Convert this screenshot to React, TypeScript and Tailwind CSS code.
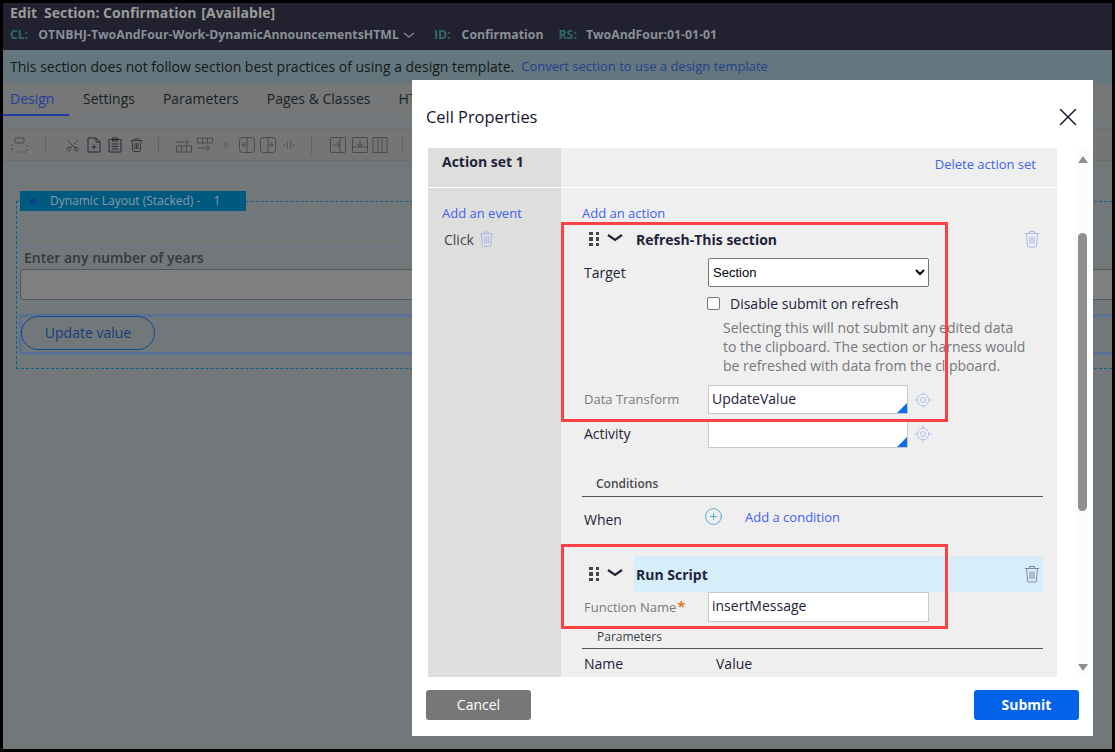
import { CirclePlus, LocateFixed, Scissors, X } from "lucide-react";

function TrashIcon({ className }: { className: string }) {
  return (
    <svg viewBox="0 0 16 18" fill="none" stroke="currentColor" strokeWidth="1" className={className}>
      <path d="M1 3.5h14M5.500 3.500V1.500h5v2M2.500 3.500l1 12.500q.1 1 1 1h7q.9 0 1-1l1-12.500" />
      <path d="M6 6.500v7.500M8 6.500v7.500M10 6.500v7.500" />
    </svg>
  );
}

function DragDots() {
  return (
    <div className="grid grid-cols-2 gap-x-[3px] gap-y-[2px] w-[10px]">
      {[0, 1, 2, 3, 4, 5].map((i) => (
        <span key={i} className="w-[3.5px] h-[3.5px] bg-[#45454f]" />
      ))}
    </div>
  );
}

function Chevron() {
  return (
    <svg viewBox="0 0 16 8" fill="none" stroke="currentColor" strokeWidth="2.2" className="w-[16px] h-[8px] ml-[8px] -mt-[2px] text-[#23233a] shrink-0">
      <path d="M1 1l7 5 7-5" />
    </svg>
  );
}

// pega style autocomplete field with the little blue corner
function PromptInput({ value }: { value: string }) {
  return (
    <div className="relative w-[200px] h-[29px] bg-white border border-[#c8c8c8] pl-[3px] text-[14px] leading-[25px] text-[#23233a]">
      {value}
      <span className="absolute right-0 bottom-0 w-0 h-0 border-l-[10px] border-l-transparent border-b-[10px] border-b-[#0a6cf0]" />
    </div>
  );
}

function ToolIcon({ children, w = "w-[16px]" }: { children: React.ReactNode; w?: string }) {
  return (
    <svg viewBox="0 0 16 16" fill="none" stroke="currentColor" strokeWidth="1" className={`${w} h-[16px] shrink-0`}>
      {children}
    </svg>
  );
}

function Toolbar() {
  return (
    <div className="h-[32px] mt-[13px] bg-[#737577] border-y border-[#6b6d6f] flex items-center pl-[7px] text-[#4a4c4f]">
      <ToolIcon w="w-[18px]">
        <path d="M4 1h9v5H4z" />
        <path d="M1 7v8h15V7" strokeDasharray="2 2" />
      </ToolIcon>
      <span className="w-px h-[17px] bg-[#606264] ml-[17px] mr-[19px]" />
      <Scissors size={15} strokeWidth={1} className="-rotate-90 text-[#25272a]" />
      <svg viewBox="0 0 14 16" fill="none" stroke="currentColor" strokeWidth="1" className="w-[14px] h-[16px] ml-[7px] text-[#2b2b2e]">
        <path d="M1 1h8l4 4v10H1zM9 1v4h4M7 7.500v5M4.500 10h5" />
      </svg>
      <svg viewBox="0 0 14 16" fill="none" stroke="currentColor" strokeWidth="1" className="w-[14px] h-[16px] ml-[7px] text-[#2b2b2e]">
        <path d="M1 2.500h12V15H1zM4.500 1h5v3h-5zM3.500 7h7M3.500 9.500h7M3.500 12h7" />
      </svg>
      <TrashIcon className="w-[13px] h-[16px] ml-[8px] text-[#2b2b2e]" />
      <span className="w-px h-[17px] bg-[#606264] ml-[15px] mr-[16px]" />
      <ToolIcon w="w-[17px]">
        <path d="M1 9h15v6H1zM6 9v6M11 9v6M1 5h12M10 2l3 3-3 3" />
      </ToolIcon>
      <ToolIcon w="w-[17px] ml-[4px]">
        <path d="M1 1h15v5H1zM6 1v5M11 1v5M1 11h12M10 8l3 3-3 3" />
      </ToolIcon>
      <ToolIcon w="w-[8px] ml-[9px]">
        <path d="M8 1v4M5 3l3 3 3-3M1 8h14M8 15v-4M5 13l3-3 3 3" />
      </ToolIcon>
      <ToolIcon w="w-[16px] ml-[9px]">
        <rect x="0.5" y="0.5" width="15" height="15" rx="3" />
        <path d="M8 1v14M8 8H3M5.500 5.500 3 8l2.500 2.500" />
      </ToolIcon>
      <ToolIcon w="w-[16px] ml-[5px]">
        <rect x="0.5" y="0.5" width="15" height="15" rx="3" />
        <path d="M8 1v14M8 8h5M10.500 5.500 13 8l-2.500 2.500" />
      </ToolIcon>
      <ToolIcon w="w-[14px] ml-[6px]">
        <path d="M6 4v8M10 4v8M1 8h3M12 8h3" />
      </ToolIcon>
      <span className="w-px h-[17px] bg-[#606264] ml-[15px] mr-[18px]" />
      <ToolIcon w="w-[16px]">
        <rect x="0.5" y="0.5" width="15" height="15" rx="1" />
        <path d="M10 1v14M3 8h7M7 5l3 3-3 3" />
      </ToolIcon>
      <ToolIcon w="w-[16px] ml-[6px]">
        <rect x="0.5" y="0.5" width="15" height="15" rx="1" />
        <path d="M1 10h14M8 3v7M5 7l3 3 3-3" />
      </ToolIcon>
      <ToolIcon w="w-[16px] ml-[4px]">
        <path d="M1 .5h14M1 15.500h14M1 .5v15M6 .5v15M10 .5v15M15 .5v15" />
      </ToolIcon>
      <span className="w-px h-[17px] bg-[#606264] ml-[14px]" />
    </div>
  );
}

function Background() {
  return (
    <div className="flex flex-col h-full bg-[#72777a] overflow-hidden">
      <div className="h-[48px] bg-[#21212f] pl-[7px] -mt-[2px] pt-[1px] box-content shrink-0">
        <div className="flex items-baseline h-[22px] font-bold text-[14px] text-[#9b9b9b] leading-[22px]">
          <span className="mr-[7px]">Edit</span>
          <span>Section: Confirmation</span>
          <span className="ml-[5px]">[Available]</span>
        </div>
        <div className="flex items-center h-[22px] font-bold text-[12.300px] text-[#8b8f98]">
          <span className="text-[#2f6b66] mr-[10px]">CL:</span>
          <span>OTNBHJ-TwoAndFour-Work-DynamicAnnouncementsHTML</span>
          <svg viewBox="0 0 12 7" fill="none" stroke="currentColor" strokeWidth="1.2" className="w-[12px] h-[7px] ml-[4px]">
            <path d="M1 1l5 4 5-4" />
          </svg>
          <span className="text-[#2f6b66] ml-[19px] mr-[11px]">ID:</span>
          <span>Confirmation</span>
          <span className="text-[#2f6b66] ml-[15px] mr-[9px]">RS:</span>
          <span>TwoAndFour:01-01-01</span>
        </div>
      </div>
      <div className="h-[33px] bg-[#65777e] pl-[7px] flex items-center text-[14px] text-[#14181b] shrink-0">
        This section does not follow section best practices of using a design template.
        <span className="ml-[7px] text-[13px] text-[#20428f]">Convert section to use a design template</span>
      </div>
      <div className="h-[33px] bg-[#757779] pl-[7px] flex text-[14px] text-[#1c1f24] shrink-0">
        <div className="w-[66px] -ml-[7px] pl-[7px] border-b-2 border-[#1f3d9c] text-[#26409a] leading-[31px]">Design</div>
        <span className="ml-[14px] leading-[31px]">Settings</span>
        <span className="ml-[28px] leading-[31px]">Parameters</span>
        <span className="ml-[28px] leading-[31px]">Pages &amp; Classes</span>
        <span className="ml-[28px] leading-[31px]">HTML</span>
      </div>
      <Toolbar />
      <div className="relative ml-[13px] -mr-[20px] mt-[40px] h-[168px] border border-dashed border-[#12607f]">
        <div className="absolute -top-[11px] left-[3px] w-[226px] h-[20px] bg-[#005a80] flex items-center text-[12px] text-[#8a9aa6]">
          <span className="w-[5px] h-[5px] ml-[11px] mr-[14px] rounded-full border border-[#1a1a9c]" />
          Dynamic Layout (Stacked) -<span className="ml-[13px]">1</span>
        </div>
        <div className="mt-[11px] mx-[2px] h-[22px] border border-dashed border-[#687a96]" />
        <div className="mt-[12px] mx-[2px] h-[54px] border border-dashed border-[#687a96] flex flex-col">
          <div className="pl-[4px] h-[21px] text-[14px] font-semibold text-[#38383c] leading-[19px]">Enter any number of years</div>
          <div className="h-[32px] bg-[#7f7f7f] border border-[#555658] rounded-[4px]" />
        </div>
        <div className="mt-[13px] mx-[2px] h-[41px] border-[3px] border-[#5a7195] flex items-start">
          <div className="w-[134px] h-[34px] -ml-[1px] -mt-[1px] rounded-full border border-[#0f4c8c] text-center text-[14px] leading-[32px] text-[#153e78]">Update value</div>
        </div>
      </div>
    </div>
  );
}

function Dialog() {
  return (
    <div className="absolute left-[412px] top-[80px] w-[681px] h-[656px] bg-white flex flex-col">
      <div className="h-[68px] shrink-0 flex items-center justify-between pl-[14px] pr-[10px] pt-[6px] text-[16.400px] font-medium text-[#14142b]">
        Cell Properties
        <X size={30} strokeWidth={1.1} />
      </div>
      <div className="flex h-[529px] shrink-0 pl-[16px]">
        <div className="relative w-[629px] overflow-hidden flex flex-col bg-[#efefef] text-[14px] text-[#23233a]">
          <div className="flex h-[40px] shrink-0 border-b border-white">
            <div className="w-[133px] bg-[#dededd] pl-[14px] pt-[3px] font-bold leading-[22px]">Action set 1</div>
            <div className="flex-1 flex justify-end pr-[21px] pt-[6px] text-[13px] text-[#3f5ff2] leading-[20px]">Delete action set</div>
          </div>
          <div className="flex flex-1 min-h-0">
            <div className="w-[133px] bg-[#dededd] pl-[14px] pt-[15px]">
              <div className="text-[13px] text-[#3f5ff2] leading-[20px]">Add an event</div>
              <div className="flex items-center mt-[6px] ml-[2px] h-[20px] text-[#44444f]">
                Click
                <TrashIcon className="w-[15px] h-[18px] ml-[5px] text-[#aab8ea]" />
              </div>
            </div>
            <div className="flex-1 pl-[21px] pr-[14px] flex flex-col">
              <div className="mt-[15px] h-[20px] text-[13px] text-[#3f5ff2] leading-[20px]">Add an action</div>
              <div className="mt-[4px] h-[24px] flex items-center pl-[7px]">
                <DragDots />
                <Chevron />
                <span className="ml-[13px] font-bold">Refresh-This section</span>
                <TrashIcon className="ml-auto mr-[3px] w-[16px] h-[18px] text-[#aab8ea]" />
              </div>
              <div className="flex items-center h-[30px] mt-[6px]">
                <span className="w-[126px] pl-[2px]">Target</span>
                <select defaultValue="Section" className="w-[221px] h-[29px] bg-white border border-[#767676] rounded-[2px] text-[13px] text-black font-['Liberation_Sans',sans-serif]">
                  <option>Section</option>
                </select>
              </div>
              <div className="flex items-center h-[20px] mt-[6px] ml-[125px]">
                <span className="w-[13px] h-[13px] bg-white border border-[#767676] rounded-[2px]" />
                <span className="ml-[10px]">Disable submit on refresh</span>
              </div>
              <div className="ml-[141px] mt-[5px] w-[305px] text-[14px] text-[#76767c] leading-[19px]">
                Selecting this will not submit any edited data to the clipboard. The section or harness would be refreshed with data from the clipboard.
              </div>
              <div className="flex items-center h-[29px] mt-[10px]">
                <span className="w-[126px] pl-[2px] text-[13px] text-[#7a7a7e]">Data Transform</span>
                <PromptInput value="UpdateValue" />
                <LocateFixed size={20} strokeWidth={1} className="ml-[5px] text-[#aab8ea]" />
              </div>
              <div className="flex items-center h-[29px] mt-[5px]">
                <span className="w-[126px] pl-[2px]">Activity</span>
                <PromptInput value="" />
                <LocateFixed size={20} strokeWidth={1} className="ml-[5px] text-[#aab8ea]" />
              </div>
              <div className="mt-[26px] pl-[14px] h-[23px] border-b border-[#555] text-[12px] font-semibold text-[#4a4a4e] leading-[20px]">Conditions</div>
              <div className="flex items-center h-[44px]">
                <span className="w-[122px] pl-[2px] pt-[1px]">When</span>
                <CirclePlus size={19} strokeWidth={1} className="text-[#2a9fd0] -mt-[5px]" />
                <span className="ml-[22px] -mt-[3px] text-[13px] text-[#3f5ff2]">Add a condition</span>
              </div>
              <div className="mt-[15px] h-[36px] flex items-center pl-[7px] shrink-0">
                <DragDots />
                <Chevron />
                <div className="ml-[11px] flex-1 h-[36px] bg-[#d6eefa] flex items-center pl-[2px] font-bold">
                  Run Script
                  <TrashIcon className="ml-auto mr-[3px] w-[16px] h-[18px] text-[#7c8a94]" />
                </div>
              </div>
              <div className="flex items-center h-[30px] shrink-0">
                <span className="w-[126px] pl-[2px] pt-[1px] text-[13px] text-[#7a7a7e]">
                  Function Name<span className="text-[#d9822b] font-bold text-[15px] leading-none ml-px">*</span>
                </span>
                <div className="w-[221px] h-[30px] bg-white border border-[#c8c8c8] pl-[3px] text-[14px] leading-[26px]">insertMessage</div>
              </div>
              <div className="mt-[5px] pl-[15px] h-[22px] shrink-0 border-b border-[#555] text-[12px] font-medium text-[#3e3e44] leading-[20px]">Parameters</div>
              <div className="flex h-[24px] items-center shrink-0 mt-[2px]">
                <span className="w-[134px] pl-[2px]">Name</span>
                <span>Value</span>
              </div>
            </div>
          </div>
          {/* red annotation boxes drawn on the screenshot */}
          <div className="absolute left-[133px] top-[74px] w-[387px] h-[200px] border-[3px] border-[#fb4144]" />
          <div className="absolute left-[133px] top-[396px] w-[387px] h-[85px] border-[3px] border-[#fb4144]" />
        </div>
        <div className="ml-[18px] w-[15px] bg-[#fcfcfc] flex flex-col items-center relative">
          <span className="mt-[8px] w-0 h-0 border-x-[5px] border-x-transparent border-b-[7px] border-b-[#8f8f8f]" />
          <div className="mt-[70px] w-[9px] h-[278px] rounded-full bg-[#8f8f8f]" />
          <span className="absolute bottom-[6px] w-0 h-0 border-x-[5px] border-x-transparent border-t-[7px] border-t-[#8f8f8f]" />
        </div>
      </div>
      <div className="flex justify-between pl-[14px] pr-[14px] mt-[13px]">
        <div className="w-[105px] h-[30px] rounded-[3px] bg-[#777] text-white text-center text-[14px] leading-[30px]">Cancel</div>
        <div className="w-[105px] h-[30px] rounded-[3px] bg-[#0263e8] text-white font-bold text-center text-[14px] leading-[30px]">Submit</div>
      </div>
    </div>
  );
}

export default function App() {
  return (
    <div className="relative w-[1115px] h-[752px] overflow-hidden bg-black p-[3px] font-['Open_Sans','Noto_Sans',sans-serif]">
      <Background />
      <Dialog />
    </div>
  );
}
